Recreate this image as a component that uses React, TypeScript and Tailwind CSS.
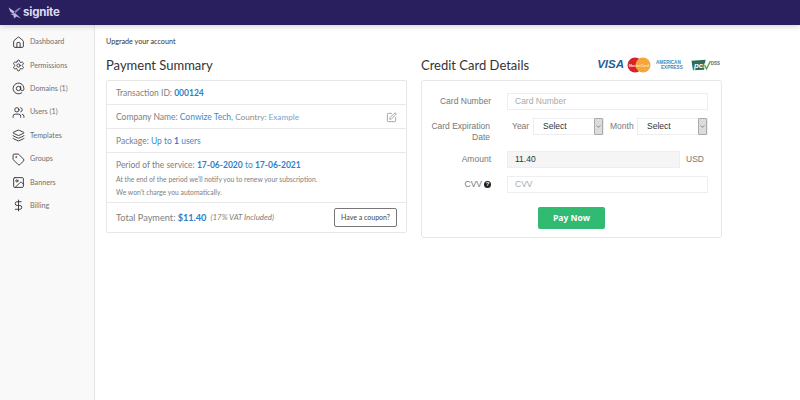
import React from 'react';
import { House, Settings, AtSign, Users, Layers, Tag, Image, DollarSign, SquarePen, ChevronDown } from 'lucide-react';

const navItems = [
  { label: 'Dashboard', icon: House },
  { label: 'Permissions', icon: Settings },
  { label: 'Domains (1)', icon: AtSign },
  { label: 'Users (1)', icon: Users },
  { label: 'Templates', icon: Layers },
  { label: 'Groups', icon: Tag },
  { label: 'Banners', icon: Image },
  { label: 'Billing', icon: DollarSign },
];

const SelectBox = () => (
  <div className="w-[71px] h-[17px] flex items-center justify-between border border-[#eceeef] bg-white pl-[9px]">
    <span className="text-[8.5px] text-[#333]">Select</span>
    <span className="w-[9px] h-[17px] flex items-center justify-center bg-[#dcdcdc] border border-[#a9a9a9] rounded-[1px]">
      <ChevronDown className="w-[7px] h-[7px] text-[#555]" />
    </span>
  </div>
);

const FormRow = ({ label, children }: { label: React.ReactNode; children: React.ReactNode }) => (
  <div className="flex items-start mb-[8px]">
    <div className="w-[69px] pt-[3px] text-right text-[8.5px] leading-[11px] text-[#777]">{label}</div>
    <div className="ml-[16px] flex-1 flex items-center">{children}</div>
  </div>
);

export default function App() {
  return (
    <div className="w-[800px] h-[400px] overflow-hidden flex flex-col bg-white font-['Lato',sans-serif]">
      <header className="h-[25px] shrink-0 flex items-center pl-[8px] bg-[#2a1f5e] shadow-[0_1px_6px_rgba(0,0,0,0.2)] z-10">
        <svg viewBox="0 0 14 12" className="w-[14px] h-[12px]">
          <path d="M0.5 0.5 L6.5 4.5 L5.5 6.5 L2.5 5 Z" fill="#c4c0e4" />
          <path d="M13.5 0.5 L7.5 6 L6.5 4.5 L10 1.5 Z" fill="#8f89c4" />
          <path d="M2.5 7 L7 6 L13 11.5 L8.5 9.5 L6 11.5 L5.5 8.5 Z" fill="#b9b4dc" />
        </svg>
        <span className="ml-[1px] text-[11.5px] font-bold text-[#dedbf0] font-['Inter',sans-serif] tracking-[-0.2px]">signite</span>
      </header>

      <div className="flex flex-1 min-h-0">
        <aside className="w-[95px] shrink-0 bg-[#f9f9fa] border-r border-[#e6e6e8] pt-[5.5px]">
          {navItems.map(({ label, icon: Icon }) => (
            <div key={label} className="h-[23.4px] flex items-center pl-[12px]">
              <Icon className="w-[13px] h-[13px] text-[#333338] shrink-0" strokeWidth={1.7} />
              <span className="ml-[5px] pt-[1px] text-[7.2px] text-[#707070]">{label}</span>
            </div>
          ))}
        </aside>

        <main className="flex-1 pl-[11px] pt-[11px]">
          <p className="text-[7.2px] leading-[11px] text-[#333]">Upgrade your account</p>

          <div className="mt-[7px] flex gap-[14px] items-start">
            <section className="w-[301px]">
              <h2 className="h-[22px] text-[13px] leading-[22px] text-[#333]">Payment Summary</h2>
              <div className="mt-[4px] border border-[#e7e7e9] rounded-[2px] text-[8.5px] text-[#808080] divide-y divide-[#e9e9eb]">
                <div className="h-[24px] flex items-center pl-[9px] pt-[1px]">
                  Transaction ID:&nbsp;<b className="text-[#2f80c8]">000124</b>
                </div>
                <div className="h-[24px] flex items-center pl-[9px] pr-[9px] pt-[1px]">
                  Company Name:&nbsp;<span className="text-[#3d8ccc]">Conwize Tech</span>,&nbsp;
                  <span className="text-[8.2px] text-[#8c8c8c]">Country:&nbsp;</span>
                  <span className="text-[8.2px] text-[#7d9fcb]">Example</span>
                  <SquarePen className="ml-auto w-[11px] h-[11px] text-[#888]" strokeWidth={1.6} />
                </div>
                <div className="h-[24px] flex items-center pl-[9px] pt-[1px]">
                  Package:&nbsp;<span className="text-[#3d8ccc]">Up to <b className="text-[#2f80c8]">1</b> users</span>
                </div>
                <div className="h-[50px] pl-[9px] pt-[6px]">
                  <div className="leading-[13px]">
                    Period of the service: <b className="text-[#2f80c8]">17-06-2020</b> <span className="text-[#3d8ccc]">to</span> <b className="text-[#2f80c8]">17-06-2021</b>
                  </div>
                  <p className="mt-[1px] text-[6.8px] leading-[12.5px] text-[#808080]">At the end of the period we'll notify you to renew your subscription.</p>
                  <p className="text-[6.8px] leading-[12.5px] text-[#808080]">We won't charge you automatically.</p>
                </div>
                <div className="h-[29px] flex items-center pl-[9px] pr-[9px]">
                  <span className="text-[9.2px]">Total Payment:</span>&nbsp;<b className="text-[9.2px] text-[#2f80c8]">$11.40</b>
                  <i className="ml-[4px] text-[7.9px] text-[#808080]">(17% VAT Included)</i>
                  <button className="ml-auto w-[63px] h-[19px] border border-[#777] rounded-[2px] text-[7px] text-[#444]">Have a coupon?</button>
                </div>
              </div>
            </section>

            <section className="w-[301px]">
              <div className="h-[22px] flex items-center justify-between">
                <h2 className="text-[13px] leading-[22px] text-[#333]">Credit Card Details</h2>
                <div className="flex items-center">
                  <span className="text-[11.5px] font-bold italic text-[#1f5f9c] font-['Liberation_Sans',sans-serif]">VISA</span>
                  <svg viewBox="0 0 24 16" className="ml-[3px] w-[24px] h-[16px]">
                    <circle cx="8" cy="8" r="7.5" fill="#d9222a" />
                    <circle cx="16" cy="8" r="7.5" fill="#f4a63a" />
                    <text x="12" y="9.5" textAnchor="middle" fontSize="3.6" fontWeight="700" fill="#fde3c8" fontFamily="Liberation Sans, sans-serif">MasterCard</text>
                  </svg>
                  <span className="ml-[5px] w-[29px] text-[4.6px] leading-[5.5px] font-bold text-[#3f88b8] font-['Liberation_Sans',sans-serif]">
                    AMERICAN<br /><span className="pl-[5px]">EXPRESS</span>
                  </span>
                  <svg viewBox="0 0 32 12" className="ml-[6px] w-[31px] h-[12px]">
                    <path d="M0.5 1.5 L15 0.5 L13.5 11 L2 11.5 Z" fill="#2f6b5a" />
                    <text x="3.2" y="8.8" fontSize="8" fontWeight="700" fontStyle="italic" fill="#fff" fontFamily="Liberation Sans, sans-serif">pci</text>
                    <path d="M14 6 L16 10 L20 2" fill="none" stroke="#5aa845" strokeWidth="1.4" />
                    <text x="20.5" y="6" fontSize="4.6" fontWeight="700" fill="#5b6770" fontFamily="Liberation Sans, sans-serif">DSS</text>
                  </svg>
                </div>
              </div>
              <div className="mt-[4px] h-[158px] border border-[#e7e7e9] rounded-[3px] pt-[12px] pr-[13px] font-['Liberation_Sans',sans-serif]">
                <FormRow label="Card Number">
                  <div className="w-full h-[17px] flex items-center pl-[7px] border border-[#eceeef] text-[8.5px] text-[#aaa]">Card Number</div>
                </FormRow>
                <FormRow label={<>Card Expiration<br />Date</>}>
                  <span className="ml-[6px] w-[21px] text-[8.5px] text-[#777]">Year</span>
                  <SelectBox />
                  <span className="ml-[6px] w-[27px] text-[8.5px] text-[#777]">Month</span>
                  <SelectBox />
                </FormRow>
                <FormRow label="Amount">
                  <div className="w-[173px] h-[17px] flex items-center pl-[7px] bg-[#f5f5f5] border border-[#eceeef] text-[8.5px] text-[#333]">11.40</div>
                  <span className="ml-[6px] text-[8.5px] text-[#777]">USD</span>
                </FormRow>
                <FormRow label={<span className="inline-flex items-center justify-end gap-[2px]">CVV <span className="w-[7px] h-[7px] rounded-full bg-[#222] text-white text-[6px] leading-[7px] font-bold text-center">?</span></span>}>
                  <div className="w-full h-[17px] flex items-center pl-[7px] border border-[#eceeef] text-[8.5px] text-[#aaa]">CVV</div>
                </FormRow>
                <button className="block mt-[14px] ml-[116px] w-[67px] h-[22px] rounded-[2px] bg-[#31bb72] text-[8.5px] font-bold text-white font-['Open_Sans',sans-serif]">Pay Now</button>
              </div>
            </section>
          </div>
        </main>
      </div>
    </div>
  );
}
